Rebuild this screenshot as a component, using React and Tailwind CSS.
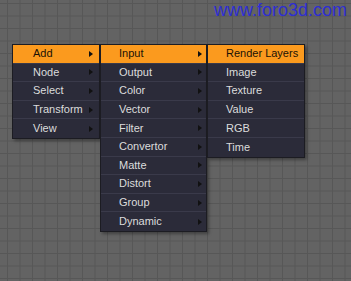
const menus = [
  {
    width: "w-[88px]",
    pad: "pl-[20px] pr-[6px]",
    items: ["Add", "Node", "Select", "Transform", "View"],
    active: 0,
    arrows: true,
  },
  {
    width: "w-[107px]",
    pad: "pl-[18px] pr-[4px]",
    items: ["Input", "Output", "Color", "Vector", "Filter", "Convertor", "Matte", "Distort", "Group", "Dynamic"],
    active: 0,
    arrows: true,
  },
  {
    width: "w-[98px]",
    pad: "pl-[18px] pr-[4px]",
    items: ["Render Layers", "Image", "Texture", "Value", "RGB", "Time"],
    active: 0,
    arrows: false,
  },
];

function Arrow() {
  return (
    <svg width="4" height="6" viewBox="0 0 4 6" className="shrink-0">
      <path d="M0 0 L4 3 L0 6 Z" fill="#111" />
    </svg>
  );
}

function Menu({ menu }) {
  return (
    <div className={`${menu.width} border border-[#1c1c22] bg-[#2b2b39] shadow-[2px_2px_3px_rgba(0,0,0,0.35)]`}>
      {menu.items.map((item, i) => {
        const active = i === menu.active;
        const last = i === menu.items.length - 1;
        return (
          <div
            key={item}
            className={`flex h-[18.6px] items-center justify-between ${menu.pad} ${
              active ? "bg-[#fb9a1e] text-[#1a1206]" : "text-[#dcdcdc]"
            } ${last ? "" : "border-b border-[#3a3a4a]"}`}
          >
            <span className="leading-none">{item}</span>
            {menu.arrows && <Arrow />}
          </div>
        );
      })}
    </div>
  );
}

export default function App() {
  return (
    <div
      className="h-[281px] w-[351px] overflow-hidden bg-[#636363] bg-[linear-gradient(to_right,#575757_1px,transparent_1px),linear-gradient(to_bottom,#575757_1px,transparent_1px)] bg-size-[12.5px_12.5px] bg-position-[7px_3px] font-['Liberation_Sans',Arial,sans-serif]"
    >
      <div className="flex justify-end pr-[4px] text-[18px] leading-[21px] text-[#2e2ed2]">www.foro3d.com</div>
      <div className="ml-[12px] mt-[23px] flex items-start text-[11px]">
        {menus.map((m, i) => (
          <Menu key={i} menu={m} />
        ))}
      </div>
    </div>
  );
}
